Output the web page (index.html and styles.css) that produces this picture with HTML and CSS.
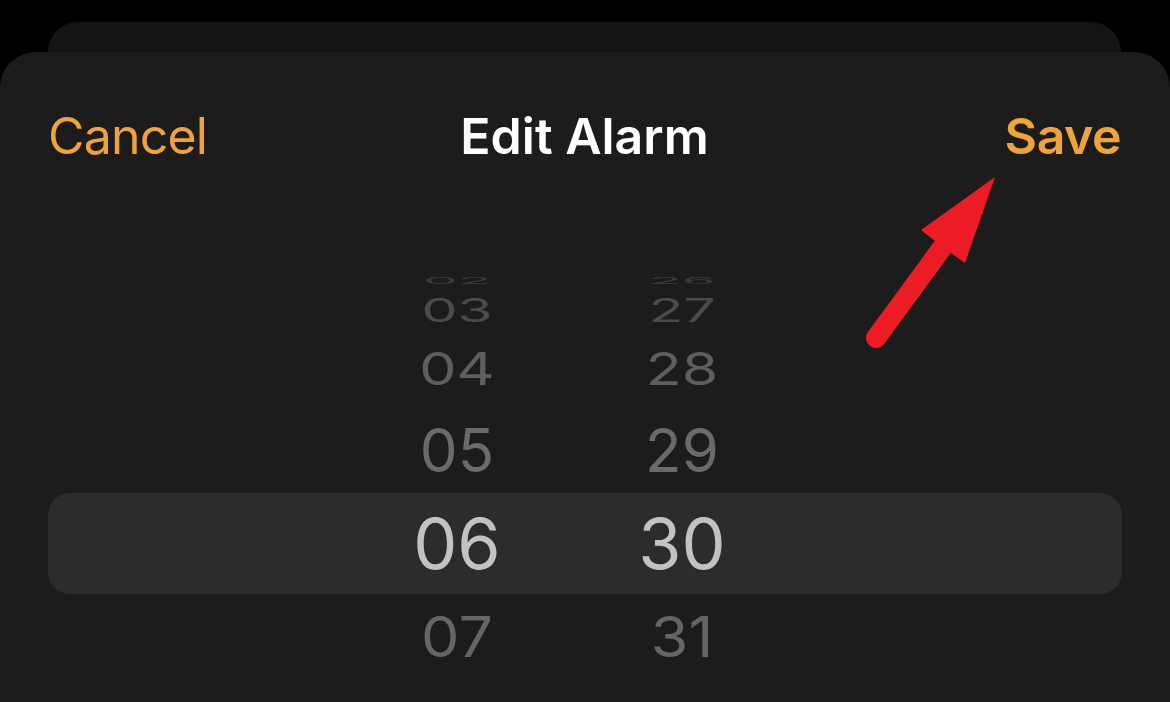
FILE: index.html
```html
<!DOCTYPE html>
<html lang="en">
<head>
  <meta charset="UTF-8">
  <title>Edit Alarm</title>
  <link rel="stylesheet" href="styles.css">
</head>
<body>
  <div class="back-card"></div>
  <div class="sheet">
    <div class="header">
      <span class="btn cancel">Cancel</span>
      <h1 class="title">Edit Alarm</h1>
      <span class="btn save">Save</span>
    </div>

    <div class="picker">
      <div class="row r2"><span class="cell">02</span><span class="cell">26</span></div>
      <div class="row r3"><span class="cell">03</span><span class="cell">27</span></div>
      <div class="row r4"><span class="cell">04</span><span class="cell">28</span></div>
      <div class="row r5"><span class="cell">05</span><span class="cell">29</span></div>
      <div class="row r6 selected"><span class="cell">06</span><span class="cell">30</span></div>
      <div class="row r7"><span class="cell">07</span><span class="cell">31</span></div>
    </div>
  </div>

  <!-- annotation arrow pointing at Save -->
  <svg class="arrow" width="1170" height="702" viewBox="0 0 1170 702">
    <line x1="876" y1="338" x2="942" y2="248" stroke="#ed1c24" stroke-width="20" stroke-linecap="round"/>
    <polygon points="995,177 965,263 951,253 935,241 921,230" fill="#ed1c24"/>
  </svg>
</body>
</html>
```

FILE: styles.css
```css
* {
  box-sizing: border-box;
}

body {
  margin: 0;
  padding-top: 22px;
  height: 702px;
  overflow: hidden;
  background: #000;
  font-family: Inter, "Noto Sans", sans-serif;
}

.back-card {
  height: 30px;
  margin: 0 49px 0 48px;
  background: #151515;
  border-radius: 30px 30px 0 0;
}

.sheet {
  height: 650px;
  padding: 0 48px;
  background: #1c1c1c;
  border-radius: 36px 36px 0 0;
}

.header {
  display: grid;
  grid-template-columns: 1fr auto 1fr;
  align-items: center;
  height: 168px;
  padding: 0 1px 0 0;
  font-size: 50px;
}

.btn {
  color: #f1a33b;
}

.cancel {
  justify-self: start;
  letter-spacing: -0.8px;
}

.save {
  justify-self: end;
  font-weight: 600;
  letter-spacing: -0.5px;
}

.title {
  margin: 0;
  font-size: 50px;
  font-weight: 600;
  color: #fff;
}

.picker {
  padding-top: 50px;
}

.row {
  display: grid;
  grid-template-columns: 349px 120px 105px 120px;
  align-items: center;
  text-align: center;
}

.row .cell {
  display: block;
}

.row .cell:first-child {
  grid-column: 2;
}

.row .cell:last-child {
  grid-column: 4;
}

.r2 { height: 22px; line-height: 22px; font-size: 55px; color: #3b3b3b; }
.r2 .cell { transform: scaleY(0.17); }

.r3 { height: 38px; line-height: 38px; font-size: 57px; color: #4b4b4b; }
.r3 .cell { transform: scaleY(0.56); }

.r4 { height: 78px; line-height: 78px; font-size: 59px; color: #5e5e5e; }
.r4 .cell { transform: scaleY(0.77); }

.r5 { height: 85px; line-height: 85px; font-size: 60px; color: #6a6a6a; }

.r6 { height: 101px; line-height: 101px; font-size: 70px; color: #c2c2c2; }

.r7 { height: 86px; line-height: 86px; font-size: 61px; color: #656565; }
.r7 .cell { transform: scaleY(0.92); }

.selected {
  background: #2c2c2e;
  border-radius: 22px;
}

.arrow {
  position: absolute;
  left: 0;
  top: 0;
  pointer-events: none;
}
```
